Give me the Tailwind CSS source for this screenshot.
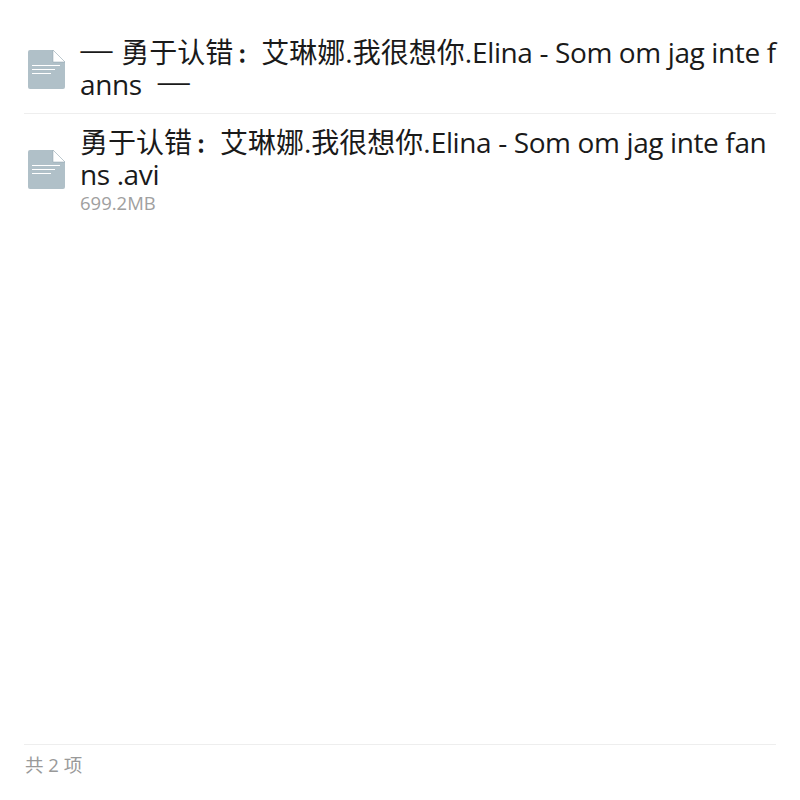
<!DOCTYPE html>
<html><head><meta charset="utf-8"><script src="https://cdn.jsdelivr.net/npm/@tailwindcss/browser@4"></script></head>
<body class="bg-white">
<div class="w-[800px] h-[800px] flex flex-col px-6 font-['Open_Sans','Noto_Sans_CJK_SC',sans-serif]">
  <div class="flex-1 pt-[36px]">
    <div class="flex items-center pb-[13px] border-b border-[#eeeeee]">
      <svg class="w-[37px] h-[39px] ml-1 mr-[15px] mt-[3px] shrink-0" viewBox="0 0 37 39"><path d="M2 0H25L37 12V37a2 2 0 0 1-2 2H2a2 2 0 0 1-2-2V2a2 2 0 0 1 2-2Z" fill="#b0c0c8"/><path d="M25 0L37 12H25Z" fill="#fff" stroke="#8fa3ad" stroke-width="0.5"/><path d="M4 15.5H32M4 19.5H27M4 23.5H23" stroke="#fff" stroke-width="1"/></svg>
      <div class="flex-1 min-w-0 text-[28px] leading-[32px] text-[#1a1a1a] break-all"><span class="font-['Noto_Sans'] font-light text-[35px] leading-[0] relative -top-px -ml-px">—</span> 勇于认错<span class="inline-block w-[28px] font-['Noto_Sans_CJK_TC'] text-[18px] leading-[0] [-webkit-text-stroke:1.4px_#1a1a1a]">：</span>艾琳娜.我很想你.<span class="tracking-[-0.38px]">Elina - Som om jag inte fanns</span>&nbsp; <span class="font-['Noto_Sans'] font-light text-[35px] leading-[0] relative -top-px">—</span></div>
    </div>
    <div class="flex items-center pt-[12px]">
      <svg class="w-[37px] h-[39px] ml-1 mr-[15px] mb-[2px] shrink-0" viewBox="0 0 37 39"><path d="M2 0H25L37 12V37a2 2 0 0 1-2 2H2a2 2 0 0 1-2-2V2a2 2 0 0 1 2-2Z" fill="#b0c0c8"/><path d="M25 0L37 12H25Z" fill="#fff" stroke="#8fa3ad" stroke-width="0.5"/><path d="M4 15.5H32M4 19.5H27M4 23.5H23" stroke="#fff" stroke-width="1"/></svg>
      <div class="flex-1 min-w-0">
        <div class="text-[28px] leading-[32px] text-[#1a1a1a] break-all">勇于认错<span class="inline-block w-[28px] font-['Noto_Sans_CJK_TC'] text-[18px] leading-[0] [-webkit-text-stroke:1.4px_#1a1a1a]">：</span>艾琳娜.我很想你.<span class="tracking-[-0.38px]">Elina - Som om jag inte fanns .avi</span></div>
        <div class="mt-px text-[18.5px] leading-[24px] text-[#a0a0a0]">699.2MB</div>
      </div>
    </div>
  </div>
  <div class="h-[56px] border-t border-[#eeeeee] pt-[8px] pl-px text-[18.5px] leading-[24px] text-[#999999]">共 2 项</div>
</div>
</body></html>
